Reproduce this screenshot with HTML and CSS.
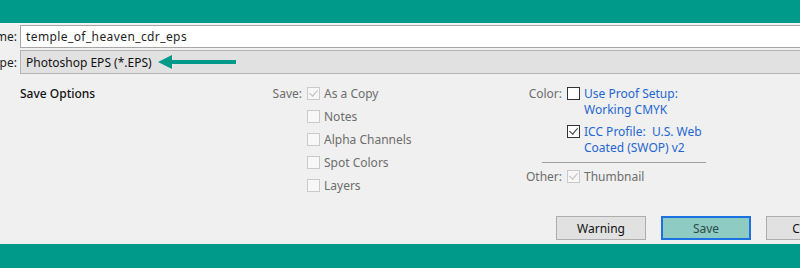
FILE: index.html
```html
<!DOCTYPE html>
<html>
<head>
    <title>Save As</title>
    <link rel="stylesheet" href="styles.css">
</head>
<body>
    <div class="band"></div>
    <div class="fields">
        <div class="field-row">
            <label class="field-label">File name:</label>
            <div class="field-box name-box">temple_of_heaven_cdr_eps</div>
        </div>
        <div class="field-row">
            <label class="field-label">Save as type:</label>
            <div class="field-box type-box">
                <span>Photoshop EPS (*.EPS)</span>
                <svg class="arrow" width="80" height="14" viewBox="0 0 80 14">
                    <path d="M0 7 L14 0 L14 5 L78 5 L78 9 L14 9 L14 14 Z" fill="#009a8b"/>
                </svg>
            </div>
        </div>
    </div>
    <div class="panel">
        <div class="options">
            <div class="col-title">Save Options</div>
            <div class="group save-group">
                <div class="group-label">Save:</div>
                <div class="check-list">
                    <div class="check-row"><span class="box disabled checked"></span><span class="check-text">As a Copy</span></div>
                    <div class="check-row"><span class="box disabled"></span><span class="check-text">Notes</span></div>
                    <div class="check-row"><span class="box disabled"></span><span class="check-text">Alpha Channels</span></div>
                    <div class="check-row"><span class="box disabled"></span><span class="check-text">Spot Colors</span></div>
                    <div class="check-row"><span class="box disabled"></span><span class="check-text">Layers</span></div>
                </div>
            </div>
            <div class="group color-group">
                <div class="group-label">Color:</div>
                <div class="check-list right-list">
                    <div class="check-row"><span class="box"></span><span class="check-text link">Use Proof Setup:<br>Working CMYK</span></div>
                    <div class="check-row"><span class="box checked"></span><span class="check-text link">ICC Profile:&nbsp; U.S. Web<br>Coated (SWOP) v2</span></div>
                </div>
                <div class="separator"></div>
                <div class="group-label">Other:</div>
                <div class="check-list">
                    <div class="check-row"><span class="box disabled checked"></span><span class="check-text">Thumbnail</span></div>
                </div>
            </div>
        </div>
        <div class="buttons">
            <button class="btn">Warning</button>
            <button class="btn primary">Save</button>
            <button class="btn">Cancel</button>
        </div>
    </div>
    <div class="band bottom"></div>
</body>
</html>
```

FILE: styles.css
```css
body {
    margin: 0;
    width: 800px;
    height: 268px;
    overflow: hidden;
    background: #f0f0f0;
    font-family: "Noto Sans", "Open Sans", sans-serif;
    font-size: 12px;
    color: #1e1e1e;
}
.band {
    height: 23px;
    background: #009a8b;
    border-bottom: 1px solid #f4f4f4;
}
.band.bottom {
    height: 24px;
    border-bottom: none;
}
.fields {
    display: flex;
    flex-direction: column;
    gap: 2px;
    margin-top: 1px;
}
.field-row {
    display: flex;
    align-items: center;
}
.field-label {
    width: 17px;
    margin-right: 3px;
    overflow: hidden;
    white-space: nowrap;
    display: flex;
    justify-content: flex-end;
    color: #1e1e1e;
}
.field-box {
    flex: 1;
    height: 23px;
    box-sizing: border-box;
    margin-right: -10px;
    padding-left: 5px;
    display: flex;
    align-items: center;
    white-space: nowrap;
}
.name-box {
    background: #fff;
    border: 1px solid #a6a6a6;
    letter-spacing: 0.4px;
}
.type-box {
    height: 24px;
    background: #e1e1e1;
    border: 1px solid #b4b4b4;
    color: #111;
}
.arrow {
    margin-left: 6px;
}
.panel {
    height: 170px;
    box-sizing: border-box;
    padding-top: 12px;
    display: flex;
    flex-direction: column;
}
.options {
    display: flex;
    align-items: flex-start;
    padding-left: 20px;
}
.col-title {
    width: 250px;
    line-height: 16px;
    color: #111;
    font-weight: 500;
}
.group {
    display: grid;
    column-gap: 5px;
    row-gap: 6px;
    align-items: start;
}
.save-group {
    grid-template-columns: 32px auto;
    width: 254px;
}
.color-group {
    grid-template-columns: 38px auto;
}
.group-label {
    line-height: 16px;
    text-align: right;
    color: #6d6d6d;
}
.check-list {
    display: flex;
    flex-direction: column;
    gap: 7px;
}
.right-list {
    gap: 6px;
}
.check-row {
    display: flex;
    align-items: flex-start;
    gap: 4px;
}
.box {
    width: 13px;
    height: 13px;
    box-sizing: border-box;
    margin-top: 1px;
    border: 1px solid #333;
    background: #fff;
    position: relative;
    flex-shrink: 0;
}
.box.disabled {
    border-color: #cacaca;
    background: #f7f7f7;
}
.box.checked::after {
    content: "";
    position: absolute;
    left: 3px;
    top: 0px;
    width: 4px;
    height: 7px;
    border: solid #333;
    border-width: 0 1.5px 1.5px 0;
    transform: rotate(40deg);
}
.box.disabled.checked::after {
    border-color: #bdbdbd;
}
.check-text {
    line-height: 16px;
    color: #6d6d6d;
}
.check-text.link {
    color: #1f66d1;
}
.separator {
    grid-column: 1 / 3;
    margin-left: 18px;
    width: 164px;
    height: 1px;
    background: #a0a0a0;
}
.buttons {
    margin-top: auto;
    margin-bottom: 4px;
    padding-left: 556px;
    display: flex;
    gap: 15px;
}
.btn {
    flex-shrink: 0;
    width: 90px;
    height: 24px;
    font-family: inherit;
    font-size: 12px;
    color: #111;
    background: #e1e1e1;
    border: 1px solid #adadad;
    padding: 0;
}
.btn.primary {
    background: #8ecbc3;
    border: 2px solid #1b72e0;
    color: #2c4c48;
}
```
